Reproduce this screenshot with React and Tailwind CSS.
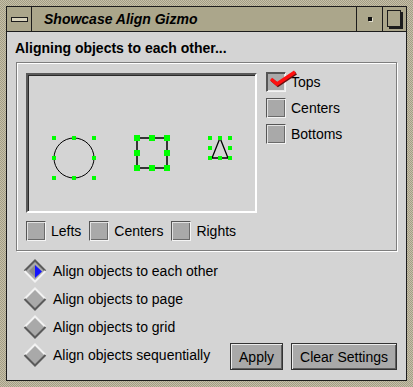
import React from "react";

const font = "font-['Liberation_Sans',Arial,sans-serif]";

function CheckBox({ label, checked }) {
  return (
    <div className="flex items-center gap-[5px]">
      <div
        className={
          "relative w-[20px] h-[20px] border border-t-[#555] border-l-[#555] border-b-[#f4f4f4] border-r-[#f4f4f4] bg-[#a9a9a9] " +
          (checked
            ? "shadow-[inset_1px_1px_0_#555,inset_-1px_-1px_0_#e8e8e8]"
            : "shadow-[inset_1px_1px_0_#e2e2e2,inset_-1px_-1px_0_#6a6a6a]")
        }
      >
        {checked && (
          <svg
            width="30"
            height="22"
            viewBox="0 0 30 22"
            className="absolute left-[1px] top-[-6px] overflow-visible"
          >
            {/* check mark with its dark shadow */}
            <path
              d="M3 12 L9 17 L27 5"
              fill="none"
              stroke="#6a1010"
              strokeWidth="3.5"
              strokeLinejoin="miter"
              transform="translate(1,1)"
            />
            <path
              d="M3 12 L9 17 L27 5"
              fill="none"
              stroke="#ff1010"
              strokeWidth="3.5"
              strokeLinejoin="miter"
            />
          </svg>
        )}
      </div>
      <span className="text-[14px] leading-[20px] text-black">{label}</span>
    </div>
  );
}

function Diamond({ selected }) {
  return (
    <svg width="24" height="24" viewBox="0 0 24 24" className="shrink-0">
      <polygon points="12,1 23,12 12,23 1,12" fill="#a9a9a9" />
      <polyline
        points="1.5,12 12,1.5 22.5,12"
        fill="none"
        stroke={selected ? "#5a5a5a" : "#f2f2f2"}
        strokeWidth="2"
      />
      <polyline
        points="1.5,12 12,22.5 22.5,12"
        fill="none"
        stroke={selected ? "#f2f2f2" : "#5a5a5a"}
        strokeWidth="2"
      />
      {selected && (
        <>
          <polygon points="6,12 12,6 12,18" fill="#8a8a8a" />
          <polygon points="12,6 19,12.5 12,19" fill="#1414ff" />
        </>
      )}
    </svg>
  );
}

function Handle({ x, y, s }) {
  return <rect x={x - s / 2} y={y - s / 2} width={s} height={s} fill="#00ff00" />;
}

function Canvas() {
  // coordinates relative to the canvas content box
  const cx = [25, 45, 65];
  const cy = [62, 82, 102];
  const sx = [108, 123, 138];
  const sy = [62, 77, 92];
  const tx = [181, 191, 201];
  const ty = [62, 72, 82];
  return (
    <svg width="226" height="135" viewBox="0 0 226 135">
      <circle cx="45" cy="82" r="20" fill="none" stroke="#000" strokeWidth="1" />
      <rect x="108" y="62" width="30" height="30" fill="none" stroke="#000" strokeWidth="1.5" />
      <polygon points="191,62 183,82 199,82" fill="none" stroke="#000" strokeWidth="1.3" />
      {cx.map((x) =>
        cy.map((y) =>
          x === 45 && y === 82 ? null : <Handle key={"c" + x + y} x={x} y={y} s={4} />
        )
      )}
      {sx.map((x) =>
        sy.map((y) =>
          x === 123 && y === 77 ? null : <Handle key={"s" + x + y} x={x} y={y} s={6} />
        )
      )}
      {tx.map((x) =>
        ty.map((y) =>
          x === 191 && y === 72 ? null : <Handle key={"t" + x + y} x={x} y={y} s={4} />
        )
      )}
    </svg>
  );
}

function Button({ children }) {
  return (
    <button className="h-[27px] px-[8px] border border-[#333] bg-[#a9a9a9] shadow-[inset_1px_1px_0_#ececec,inset_-1px_-1px_0_#5e5e5e] text-[14px] leading-none text-black">
      {children}
    </button>
  );
}

export default function App() {
  return (
    <div
      className={
        "w-[413px] h-[387px] p-[6px] bg-[#b3ad95] bg-[image:repeating-conic-gradient(#c6c0a8_0_25%,#a39d86_0_50%)] bg-[length:2px_2px] " +
        font
      }
    >
      <div className="h-full flex flex-col border border-[#1c1c1c]">
        {/* TITLE BAR */}
        <div className="h-[25px] flex bg-[#aba68b] border-b border-[#1c1c1c]">
          <div className="w-[25px] flex items-center justify-center border-r border-[#1c1c1c]">
            <div className="w-[17px] h-[5px] border border-[#1c1c1c] bg-[#d8d3bc]" />
          </div>
          <div className="flex-1 pl-[12px] flex items-center text-[14px] font-bold italic text-black">
            Showcase Align Gizmo
          </div>
          <div className="w-[26px] flex items-center justify-center border-l border-[#1c1c1c]">
            <div className="w-[4px] h-[4px] bg-[#111] shadow-[1px_1px_0_#e0dccb]" />
          </div>
          <div className="w-[24px] flex items-center justify-center border-l border-[#1c1c1c]">
            <div className="w-[14px] h-[17px] border border-[#1c1c1c] bg-[#aba68b] shadow-[2px_2px_0_#1c1c1c] -translate-x-[1px] -translate-y-[1px]" />
          </div>
        </div>

        {/* BODY */}
        <div className="flex-1 bg-[#d4d4d4] px-[9px]">
          <div className="pt-[8px] pl-[-1px] text-[14px] leading-[16px] font-bold text-black -ml-[1px]">
            Aligning objects to each other...
          </div>

          <div className="mt-[6px] border border-[#7e7e7e] shadow-[inset_1px_1px_0_#ffffff,1px_1px_0_#ffffff] pt-[10px] pl-[9px] pb-[9px]">
            <div className="flex gap-[9px]">
              <div className="w-[231px] h-[140px] border-2 border-t-[#5a5a5a] border-l-[#5a5a5a] border-b-white border-r-white shadow-[inset_1px_1px_0_#2a2a2a]">
                <div className="pt-[1px] pl-[1px]">
                  <Canvas />
                </div>
              </div>
              <div className="flex flex-col gap-[6px] -mt-[1px]">
                <CheckBox label="Tops" checked />
                <CheckBox label="Centers" />
                <CheckBox label="Bottoms" />
              </div>
            </div>
            <div className="mt-[8px] flex gap-[8px]">
              <CheckBox label="Lefts" />
              <CheckBox label="Centers" />
              <CheckBox label="Rights" />
            </div>
          </div>

          <div className="mt-[6px] flex flex-col">
            {[
              "Align objects to each other",
              "Align objects to page",
              "Align objects to grid",
            ].map((t, i) => (
              <div key={t} className="h-[28px] flex items-center gap-[6px] pl-[7px]">
                <Diamond selected={i === 0} />
                <span className="text-[14px] text-black">{t}</span>
              </div>
            ))}
            <div className="h-[28px] flex items-center gap-[6px] pl-[7px]">
              <Diamond />
              <span className="text-[14px] text-black">Align objects sequentially</span>
              <div className="ml-auto flex gap-[8px] mt-[3px]">
                <Button>Apply</Button>
                <Button>Clear Settings</Button>
              </div>
            </div>
          </div>
        </div>
      </div>
    </div>
  );
}
